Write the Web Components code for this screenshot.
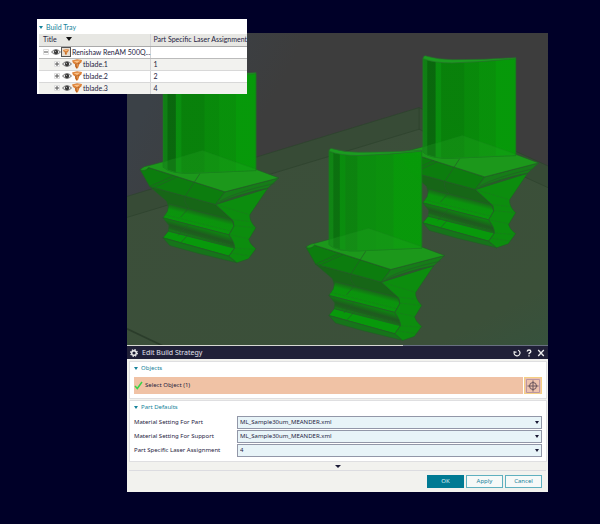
<!DOCTYPE html>
<html lang="en">
<head>
<meta charset="utf-8">
<title>Edit Build Strategy</title>
<style>
html { background: #000028; }
body { margin: 0; font: 6px/11px "Noto Sans", "Open Sans", sans-serif; color: #1e2240; }
</style>
</head>
<body>
<build-app></build-app>
<script>
const define = (name, html, setup) => {
  const template = document.createElement('template');
  template.innerHTML = html;
  customElements.define(name, class extends HTMLElement {
    constructor() {
      super();
      this.attachShadow({ mode: 'open' }).append(template.content.cloneNode(true));
    }
    connectedCallback() { if (setup) setup(this, this.shadowRoot); }
  });
};

/* Turbine blade on its fir-tree root */
const blade = (x, y, skin) => `
<g transform="translate(${x} ${y})" stroke="#245c27" stroke-width="2" stroke-linejoin="round">
  <path fill="#176617" d="M107 403L305 457 355 502 360 522 165 470 158 447Z"/>
  <path fill="url(#ribTop)" d="M165 455L355 503 360 522 345 548 147 497 160 478Z"/>
  <path fill="url(#groove)" d="M147 497L345 548 360 572 362 590 163 537 165 520Z"/>
  <path fill="#08990b" d="M163 537L362 588 345 612 147 557Z"/>
  <path fill="#16751a" d="M147 557L345 612 369 632 250 603 167 580Z"/>
  <path fill="#0c8d0e" d="M305 457L462 408 408 488Q406 506 426 527L405 562Q407 574 426 590L404 620 369 632 345 612 362 588Q363 572 345 548L360 522Q360 505 352 500Z"/>
  <path fill="#0c7d0e" d="M78 352L104 346 333 419 305 457 107 403Z"/>
  <path fill="#167d18" d="M333 419L495 377 462 408Q380 425 305 457Z"/>
  <path fill="#1c981b" d="M78 352Q90 341 105 340L150 328 266 295 428 352 495 377 333 419 104 346Q92 360 78 352Z"/>
  <path fill="none" stroke-width="2" d="M317 447Q370 418 482 394M311 453Q370 425 462 408M258 364L215 430Q206 448 225 467L200 495M222 518L192 550M222 548L202 570M107 403L180 370M120 406L190 374"/>
  <path fill="none" stroke="#28672a" stroke-width="1" stroke-dasharray="10 3" d="M305 457L405 487M355 502L408 508M360 520L426 527M348 548L405 560M362 588L424 592M353 603L412 612M150 487L355 538M163 532L350 578"/>
  <path fill="url(#${skin})" fill-opacity=".97" stroke="#16821a" stroke-width="3" d="M148 62Q190 76 235 76Q330 74 426 63V355L240 363Q170 366 148 345Z"/>
  <path fill="#2aa32a" fill-opacity=".25" stroke="#17851a" stroke-width="1" d="M148 330L266 295 425 350V355L240 363Q170 366 148 345Z"/>
  <path fill="#1b9b20" stroke="#267029" stroke-width="2" d="M148 64Q149 52 160 57Q195 67 235 67Q330 68 426 61L424 64Q330 74 235 77Q180 77 148 64Z"/>
</g>`;
const stops = list => list.map(([a, b, c]) => `<stop offset="${a}" stop-color="${c}"/><stop offset="${b}" stop-color="${c}"/>`).join('');

define('plate-scene', `
<style>:host { display: block; } svg { display: block; width: 100%; height: auto; }</style>
<svg viewBox="21 9 1264 937" role="img" aria-label="Three turbine blades on a build plate">
  <defs>
    <linearGradient id="sky" x1="0" y1=".35" x2=".25" y2=".45"><stop stop-color="#3b4147"/><stop offset="1" stop-color="#3d3d3d"/></linearGradient>
    <linearGradient id="floor" x1="0" y1="0" x2="1" y2="1"><stop stop-color="#3b4e3a"/><stop offset=".85" stop-color="#3b5039"/><stop offset="1" stop-color="#36523d"/></linearGradient>
    <linearGradient id="ribTop" gradientUnits="userSpaceOnUse" x1="260" y1="478" x2="248" y2="526"><stop stop-color="#1a641a"/><stop offset=".35" stop-color="#0b930d"/><stop offset="1" stop-color="#0a960c"/></linearGradient>
    <linearGradient id="groove" gradientUnits="userSpaceOnUse" x1="260" y1="524" x2="248" y2="566"><stop stop-color="#0b8a0d"/><stop offset=".45" stop-color="#1f5a1f"/><stop offset=".65" stop-color="#1c621c"/><stop offset="1" stop-color="#0a960c"/></linearGradient>
    <linearGradient id="skinNear">${stops([[0,.04,'#0f8613'],[.05,.11,'#0a720e'],[.12,.17,'#088f0c'],[.18,.3,'#0b850e'],[.31,.5,'#0a900d'],[.51,.69,'#0a930c'],[.7,1,'#079b09']])}</linearGradient>
    <linearGradient id="skinFar">${stops([[0,.04,'#0f8113'],[.05,.13,'#08690c'],[.14,.19,'#08900d'],[.2,.44,'#078309'],[.45,.6,'#078c09'],[.61,.78,'#079309'],[.79,1,'#059c08']])}</linearGradient>
  </defs>
  <path fill="url(#sky)" d="M21 9H1285V949H21Z"/>
  <path fill="#374b36" stroke="#2c432c" stroke-width="2" d="M10 503L898 233 1300 415V960H10Z"/>
  <path fill="url(#floor)" stroke="#2c412c" stroke-width="2" d="M10 566L898 298 1300 480V960H10Z"/>
  <path fill="none" stroke="#2c412c" stroke-width="2" d="M898 233V298"/>
  <path fill="none" stroke="#2b3d2b" stroke-width="5" d="M21 897L130 949"/>
  ${blade(-18, 67, 'skinFar')}
  ${blade(762, 22, 'skinFar')}
  ${blade(480, 300, 'skinNear')}
</svg>`);

define('eye-icon', `
<style>:host { display: block; } svg { display: block; }</style>
<svg width="10" height="10" viewBox="0 0 10 10" aria-hidden="true"><path d="M.5 5Q5 .2 9.500 5Q5 9.800 .5 5Z" fill="#ececec" stroke="#666" stroke-width=".9"/><circle cx="5" cy="5" r="2.200" fill="#3a3a3a"/><circle cx="4.400" cy="4.300" r=".6" fill="#bbb"/></svg>`);

define('part-icon', `
<style>:host { display: block; } svg { display: block; }
:host([framed]) { outline: 1px solid #555; outline-offset: -1px; background: #e8ded2; }
:host([framed]) g { transform: scale(.6); transform-origin: 5px 5px; }</style>
<svg width="10" height="10" viewBox="0 0 10 10" aria-hidden="true"><g><path d="M0 1.500L5 .3 10 1 9.400 3.500 7.500 4.800 6.800 7 6 9 4.500 9.800 3 7.500 3.200 5.500 1 4Z" fill="#dd8238"/><path d="M1.500 2L8.500 1.500 5 4ZM4 5.500L6 4.600 5.500 6.500Z" fill="#f8c28a"/><path d="M3.500 5.500L4.800 9.200M7.500 4.500L3.500 5.500" stroke="#9f5218" stroke-width=".7" fill="none"/></g></svg>`);

define('fold-title', `
<style>
:host { display: flex; align-items: center; gap: 3px; color: #16839b; }
i { border: 2px solid transparent; border-top: 3px solid #16839b; border-bottom: 0; }
h2 { font: inherit; margin: 0; }
</style><i></i><h2><slot></slot></h2>`);

define('build-tray', `
<style>
:host { display: block; background: #fff; box-sizing: border-box; padding: 1px 0 0 2px; font: 7px/11px Lato, sans-serif; }
fold-title { height: 14px; line-height: 14px; }
table { width: 100%; border-collapse: collapse; table-layout: fixed; }
th, td { padding: 0 0 0 3px; height: 11px; line-height: 11px; font-weight: 400; text-align: left; white-space: nowrap; border-left: 1px solid #d3d3d6; border-bottom: 1px solid #d8d8d8; box-sizing: border-box; }
th:first-child, td:first-child { width: 111px; padding-left: 4px; border-left: 0; }
tr { height: 12px; }
thead tr { background: #e7e7e3; }
thead th { border-bottom-color: #aaa; }
tbody tr:nth-child(even) { background: #f2f2ef; }
tbody tr:first-child td { border-bottom-color: #bbb; }
tbody tr:last-child td { border-bottom: 0; }
.sort { display: inline-block; margin-left: 8px; border: 3px solid transparent; border-top: 4px solid #111; border-bottom: 0; vertical-align: 1px; }
.item { display: flex; align-items: center; }
.child { padding-left: 11px; }
button { all: unset; width: 6px; height: 6px; margin-right: 2px; display: grid; place-items: center; }
button svg { display: block; }
.item span { padding-left: 1px; }
</style>
<fold-title>Build Tray</fold-title>
<table>
<thead><tr><th>Title <i class="sort"></i></th><th>Part Specific Laser Assignment</th></tr></thead>
<tbody>
<tr><td><div class="item"><button aria-label="Collapse"><svg width="6" height="6"><path d="M.5.5H5.500V5.500H.5Z" fill="#fff" stroke="#ddd"/><path d="M1 3H5" stroke="#555"/></svg></button><eye-icon></eye-icon><part-icon framed></part-icon><span>Renishaw RenAM 500Q...</span></div></td><td></td></tr>
</tbody>
</table>`, (host, root) => {
  const body = root.querySelector('tbody');
  [['tblade.1', 1], ['tblade.2', 2], ['tblade.3', 4]].forEach(([name, laser]) => {
    body.insertAdjacentHTML('beforeend', `<tr><td><div class="item child"><button aria-label="Expand"><svg width="6" height="6"><path d="M.5.5H5.500V5.500H.5Z" fill="#fff" stroke="#ddd"/><path d="M1 3H5M3 1V5" stroke="#555"/></svg></button><eye-icon></eye-icon><part-icon></part-icon><span>${name}</span></div></td><td>${laser}</td></tr>`);
  });
});

define('group-panel', `
<style>:host { display: block; background: #fff; border: 1px solid #dfdfe1; padding: 0 4px 4px; }
fold-title { height: 12px; }</style>
<fold-title><slot name="title"></slot></fold-title><slot></slot>`);

define('setting-field', `
<style>
:host { display: grid; grid-template-columns: 103px minmax(0, 1fr); align-items: center; }
div { position: relative; }
select { appearance: none; display: block; box-sizing: border-box; width: 100%; height: 13px; margin: 0; padding: 0 2px; border: 1px solid #9297a8; border-radius: 0; background: #e8f4f8; color: inherit; font: inherit; line-height: 11px; }
i { position: absolute; right: 3px; top: 5px; border: 2px solid transparent; border-top: 3px solid #1a1a35; border-bottom: 0; pointer-events: none; }
</style>
<label for="s"></label><div><select id="s"><option></option></select><i></i></div>`, (host, root) => {
  root.querySelector('label').textContent = host.getAttribute('label');
  root.querySelector('option').textContent = host.getAttribute('value');
});

define('push-button', `
<style>
:host { display: block; width: 37px; }
button { display: block; box-sizing: border-box; width: 100%; height: 13px; padding: 0; border: 1px solid #5fb0bf; border-radius: 0; background: #f6f9f8; color: #16839b; font: inherit; line-height: 11px; }
:host([primary]) button { background: #007a93; border-color: #007a93; color: #d9f0f4; }
</style><button type="button"><slot></slot></button>`);

define('strategy-dialog', `
<style>
:host { display: block; background: #f2f2ee; }
.edge { height: 1px; background: linear-gradient(90deg, #d6d8d2 65.500%, #687080 65.500%); }
header { display: flex; align-items: center; height: 13px; padding: 0 3px 0 3px; background: #202038; color: #e0e2ee; }
h1 { flex: 1; margin: 0 0 0 4px; font: inherit; font-size: 7px; }
header button { all: unset; margin-left: 4px; }
svg { display: block; }
main { display: grid; gap: 1px; padding: 2px 1px 0 2px; }
.pick { display: grid; grid-template-columns: minmax(0, 1fr) 18px; gap: 1px; margin-top: 3px; }
.pick output { display: flex; align-items: center; gap: 2px; height: 17px; background: #f0c2a5; }
.pick button { all: unset; box-sizing: border-box; height: 17px; border: 1px solid #f5cf83; background: #edc2ad; display: grid; place-items: center; }
.fields { display: grid; gap: 1px; margin-top: 3px; }
.more { display: grid; place-items: center; height: 8px; margin: 0 2px; border-bottom: 1px solid #dcdce0; }
.more i { border: 3px solid transparent; border-top: 3px solid #1a1a35; border-bottom: 0; }
footer { display: flex; justify-content: flex-end; gap: 2px; padding: 4px 6px; }
</style>
<div class="edge"></div>
<header>
  <svg width="8" height="8" viewBox="0 0 8 8" aria-hidden="true"><circle cx="4" cy="4" r="3.300" fill="none" stroke="#eee" stroke-width="1.300" stroke-dasharray="1.400 1.190"/><circle cx="4" cy="4" r="2.300" fill="none" stroke="#eee" stroke-width="1.400"/></svg>
  <h1>Edit Build Strategy</h1>
  <button aria-label="Reset"><svg width="8" height="8" viewBox="0 0 8 8"><path d="M5 1.200A2.900 2.900 0 1 1 1.300 3M.8 2.200L1.300 3.200 3.500 3.200" fill="none" stroke="#eee" stroke-width="1.200"/></svg></button>
  <button aria-label="Help"><svg width="8" height="8" viewBox="0 0 8 8"><path d="M2.200 2.500Q2.400 1 4 1Q5.800 1 5.800 2.500Q5.800 3.500 4.600 4Q4 4.300 4 5.300M4 6.200V7.600" fill="none" stroke="#eee" stroke-width="1.400"/></svg></button>
  <button aria-label="Close"><svg width="8" height="8" viewBox="0 0 8 8"><path d="M1.200 1L6.800 7M6.800 1L1.200 7" stroke="#eee" stroke-width="1.300"/></svg></button>
</header>
<main>
  <group-panel><span slot="title">Objects</span>
    <div class="pick"><output><svg width="9" height="9" viewBox="0 0 9 9" aria-hidden="true"><path d="M1 5L3.300 7.500 8 1" fill="none" stroke="#38d447" stroke-width="1.500"/></svg>Select Object (1)</output>
    <button aria-label="Select object"><svg width="14" height="14" viewBox="0 0 14 14"><path d="M.5.5H13.500V13.500H.5Z" fill="none" stroke="#bb96a0"/><circle cx="7" cy="7" r="3.500" fill="none" stroke="#68545c"/><path d="M7 1.500V12.500M1.500 7H12.500" stroke="#68545c"/></svg></button></div>
  </group-panel>
  <group-panel><span slot="title">Part Defaults</span>
    <div class="fields">
      <setting-field label="Material Setting For Part" value="ML_Sample30um_MEANDER.xml"></setting-field>
      <setting-field label="Material Setting For Support" value="ML_Sample30um_MEANDER.xml"></setting-field>
      <setting-field label="Part Specific Laser Assignment" value="4"></setting-field>
    </div>
  </group-panel>
</main>
<div class="more"><i></i></div>
<footer><push-button primary>OK</push-button><push-button>Apply</push-button><push-button>Cancel</push-button></footer>`);

define('build-app', `
<style>
:host { display: block; position: relative; padding: 33px 52px 32px 127px; }
build-tray { position: absolute; left: 37px; top: 19px; width: 210px; }
</style>
<plate-scene></plate-scene>
<strategy-dialog></strategy-dialog>
<build-tray></build-tray>`);
</script>
</body>
</html>
